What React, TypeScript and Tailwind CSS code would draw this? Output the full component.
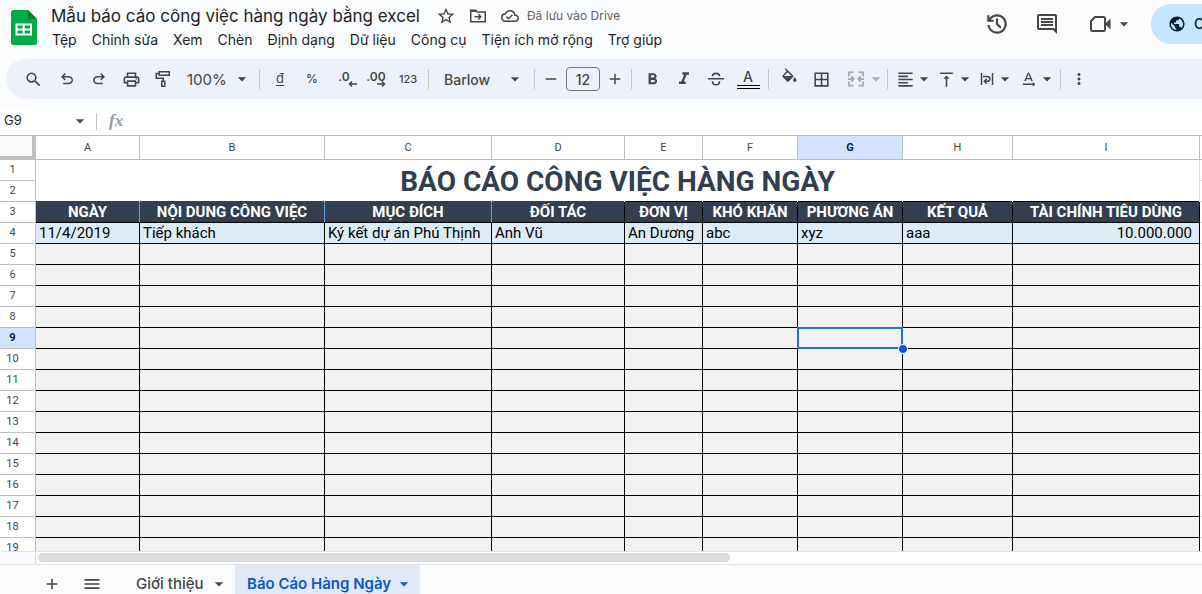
import type { ReactNode } from 'react'
import {
  MdAdd, MdArrowDropDown, MdBorderAll, MdFormatAlignLeft, MdFormatBold, MdFormatItalic,
  MdMenu, MdMoreVert, MdOutlineCloudDone, MdOutlineComment, MdOutlinePrint,
  MdPublic, MdRemove, MdSearch, MdStarBorder, MdTextRotationNone, MdVerticalAlignTop,
} from 'react-icons/md'

const menus = ['Tệp', 'Chỉnh sửa', 'Xem', 'Chèn', 'Định dạng', 'Dữ liệu', 'Công cụ', 'Tiện ích mở rộng', 'Trợ giúp']

// headBorder: lines around the cell in the dark header row
const columns = [
  { id: 'A', col: 'w-[104px]', title: 'NGÀY', value: '11/4/2019', headBorder: 'border-t-[#333f4f] border-r-[#5b9bd5]' },
  { id: 'B', col: 'w-[185px]', title: 'NỘI DUNG CÔNG VIỆC', value: 'Tiếp khách', headBorder: 'border-t-[#333f4f] border-r-[#5b9bd5]' },
  { id: 'C', col: 'w-[167px]', title: 'MỤC ĐÍCH', value: 'Ký kết dự án Phú Thịnh', headBorder: 'border-t-[#333f4f] border-r-[#5b9bd5]' },
  { id: 'D', col: 'w-[133px]', title: 'ĐỐI TÁC', value: 'Anh Vũ', headBorder: 'border-t-[#333f4f] border-r-black' },
  { id: 'E', col: 'w-[78px]', title: 'ĐƠN VỊ', value: 'An Dương', headBorder: 'border-t-black border-r-black' },
  { id: 'F', col: 'w-[95px]', title: 'KHÓ KHĂN', value: 'abc', headBorder: 'border-t-black border-r-black' },
  { id: 'G', col: 'w-[105px]', title: 'PHƯƠNG ÁN', value: 'xyz', headBorder: 'border-t-black border-r-black' },
  { id: 'H', col: 'w-[110px]', title: 'KẾT QUẢ', value: 'aaa', headBorder: 'border-t-black border-r-black' },
  { id: 'I', col: 'w-[187px]', title: 'TÀI CHÍNH TIÊU DÙNG', value: '10.000.000', headBorder: 'border-t-black border-r-black' },
]

const emptyRows = Array.from({ length: 15 }, (_, i) => i + 5)
const active = { col: 'G', row: 9 }

function Symbol({ d, className = 'size-[18px]' }: { d: string; className?: string }) {
  return (
    <svg viewBox="0 -960 960 960" fill="currentColor" className={className}>
      <path d={d} />
    </svg>
  )
}

function Caret({ className = '' }: { className?: string }) {
  return (
    <span className={`flex size-[18px] shrink-0 items-center justify-center ${className}`}>
      <MdArrowDropDown className="size-5 shrink-0" />
    </span>
  )
}

function Tool({ label, children }: { label: string; children: ReactNode }) {
  return (
    <button aria-label={label} className="flex h-7 w-8 shrink-0 items-center justify-center rounded hover:bg-black/5">
      {children}
    </button>
  )
}

function DropTool({ label, children }: { label: string; children: ReactNode }) {
  return (
    <button aria-label={label} className="flex h-7 w-[41px] shrink-0 items-center rounded pl-1 hover:bg-black/5">
      {children}
      <Caret />
    </button>
  )
}

function Separator() {
  return <div className="mx-1 h-5 w-px shrink-0 bg-[#c7c7c7]" />
}

function SheetsLogo() {
  return (
    <svg viewBox="0 0 26 35" className="h-[35px] w-[26px]">
      <path d="M2.5 0H17l9 9v23.500a2.500 2.500 0 0 1-2.500 2.500h-21A2.500 2.500 0 0 1 0 32.500v-30A2.500 2.500 0 0 1 2.500 0z" fill="#00ac47" />
      <path d="M17 0l9 9h-9z" fill="#00832d" />
      <path d="M4.500 13.500h16.500v12H4.500zM6.500 15.500v3h5.200v-3zm7.200 0v3H19v-3zm-7.200 5v3h5.200v-3zm7.200 0v3H19v-3z" fill="#fff" fillRule="evenodd" />
    </svg>
  )
}

function Header() {
  return (
    <header className="flex h-[51px] shrink-0 items-start">
      <a href="#" aria-label="Trang tính" className="mt-[10px] ml-[11px] shrink-0">
        <SheetsLogo />
      </a>
      <div className="ml-[10px] min-w-0 flex-1">
        <div className="mt-1 flex h-6 items-center pl-1">
          <h1 className="text-[17px] leading-6 whitespace-nowrap text-[#1f1f1f]">Mẫu báo cáo công việc hàng ngày bằng excel</h1>
          <button aria-label="Gắn dấu sao" className="ml-4">
            <MdStarBorder className="size-5" />
          </button>
          <button aria-label="Di chuyển" className="ml-[13px]">
            <svg viewBox="0 0 18 18" fill="none" stroke="currentColor" strokeWidth="1.500" className="size-[18px]">
              <path d="M1.750 3.250h5l1.500 1.750h8v9.750H1.750z" />
              <path d="M1.750 4.200h5.500" />
              <path d="M5.500 9.800h6M9.300 7.200l2.500 2.600-2.500 2.600" />
            </svg>
          </button>
          <button className="ml-[14px] flex items-center gap-2 text-xs whitespace-nowrap text-[#5f6368]">
            <MdOutlineCloudDone className="size-[18px] text-[#444746]" />
            Đã lưu vào Drive
          </button>
        </div>
        <nav className="mt-px flex gap-[11px] pl-[3px] text-sm leading-[22px] text-[#1f1f1f]">
          {menus.map(m => (
            <button key={m} className="rounded px-[2px] whitespace-nowrap hover:bg-black/5">{m}</button>
          ))}
        </nav>
      </div>
      <div className="flex shrink-0 items-center pt-1">
        <button aria-label="Nhật ký chỉnh sửa" className="flex h-10 w-[50px] items-center justify-center">
          <Symbol className="size-[26px]" d="M480-120q-138 0-240.500-91.500T122-440h82q14 104 92.500 172T480-200q117 0 198.500-81.500T760-480q0-117-81.500-198.500T480-760q-69 0-129 32t-101 88h110v80H120v-240h80v94q51-64 124.500-99T480-840q75 0 140.500 28.500t114 77q48.500 48.500 77 114T840-480q0 75-28.500 140.500t-77 114q-48.500 48.500-114 77T480-120Zm112-192L440-464v-216h80v184l128 128-56 56Z" />
        </button>
        <button aria-label="Nhận xét" className="flex h-10 w-[50px] items-center justify-center">
          <MdOutlineComment className="size-6" />
        </button>
        <button aria-label="Cuộc gọi" className="ml-[18px] flex h-10 w-[42px] items-center">
          <svg viewBox="0 0 21 18" className="h-[18px] w-[21px] shrink-0">
            <path d="M5 2h8.500q1.500 0 1.500 1.500v11q0 1.500-1.500 1.500h-11Q1 16 1 14.500V6z" fill="none" stroke="currentColor" strokeWidth="2" strokeLinejoin="round" />
            <path d="M15 9l5.500-5.500v11z" fill="currentColor" />
          </svg>
          <Caret className="ml-1" />
        </button>
        <button className="ml-[19px] flex h-10 w-[51px] items-center gap-2 overflow-hidden rounded-l-full bg-[#c2e7ff] pl-[17px] text-sm font-medium text-[#001d35]">
          <MdPublic className="size-[18px] shrink-0" />
          <span className="whitespace-nowrap">C</span>
        </button>
      </div>
    </header>
  )
}

function Toolbar() {
  return (
    <div role="toolbar" className="mt-2 ml-[6px] flex h-10 shrink-0 items-center overflow-hidden rounded-l-full bg-[#edf2fa] pl-[11px] text-[#444746]">
      <Tool label="Tìm"><MdSearch className="size-[19px]" /></Tool>
      <div className="w-[2px] shrink-0" />
      <Tool label="Hủy"><Symbol d="M280-200v-80h284q63 0 109.500-40T720-420q0-60-46.500-100T564-560H312l104 104-56 56-200-200 200-200 56 56-104 104h252q97 0 166.500 63T800-420q0 94-69.500 157T564-200H280Z" /></Tool>
      <Tool label="Làm lại"><Symbol d="M396-200q-97 0-166.500-63T160-420q0-94 69.500-157T396-640h252L544-744l56-56 200 200-200 200-56-56 104-104H396q-63 0-109.500 40T240-420q0 60 46.500 100T396-280h284v80H396Z" /></Tool>
      <Tool label="In"><MdOutlinePrint className="size-[19px]" /></Tool>
      <Tool label="Sao chép định dạng">
        <svg viewBox="0 0 18 18" fill="none" stroke="currentColor" strokeWidth="1.500" className="size-[18px]">
          <path d="M5.250 1.750h10v3.500h-10z" />
          <path d="M5 3.500H2.250v4.750h7v3" />
          <path d="M7.750 11.250h3v5h-3z" />
        </svg>
      </Tool>
      <div className="relative ml-2 shrink-0">
        <select aria-label="Thu phóng" className="w-[68px] appearance-none bg-transparent text-[15px]">
          <option>100%</option>
        </select>
        <Caret className="pointer-events-none absolute inset-y-0 right-1 my-auto" />
      </div>
      <Separator />
      <Tool label="Định dạng tiền tệ"><span className="text-[13px] underline underline-offset-2">đ</span></Tool>
      <Tool label="Định dạng phần trăm"><span className="text-xs font-medium">%</span></Tool>
      <Tool label="Giảm số thập phân">
        <span className="relative -mt-1 text-xs font-semibold">.0
          <svg viewBox="0 0 9 6" fill="none" stroke="currentColor" strokeWidth="1.500" className="absolute -right-[7px] -bottom-[2px] h-[6px] w-[9px]">
            <path d="M9 3H1.500M4 .5L1.500 3 4 5.500" />
          </svg>
        </span>
      </Tool>
      <Tool label="Tăng số thập phân">
        <span className="relative -mt-1 text-xs font-semibold">.00
          <svg viewBox="0 0 9 6" fill="none" stroke="currentColor" strokeWidth="1.500" className="absolute right-0 -bottom-[2px] h-[6px] w-[9px]">
            <path d="M0 3h7.500M5 .5L7.500 3 5 5.500" />
          </svg>
        </span>
      </Tool>
      <Tool label="Định dạng khác"><span className="text-[11px] font-medium">123</span></Tool>
      <Separator />
      <div className="relative shrink-0">
        <select aria-label="Phông chữ" className="w-[97px] appearance-none bg-transparent pl-[11px] text-sm font-medium">
          <option>Barlow</option>
        </select>
        <Caret className="pointer-events-none absolute inset-y-0 right-[6px] my-auto" />
      </div>
      <Separator />
      <button aria-label="Giảm cỡ chữ" className="flex size-6 shrink-0 items-center justify-center"><MdRemove className="size-[18px]" /></button>
      <input aria-label="Cỡ chữ" defaultValue="12" className="mx-[3px] h-6 w-[34px] shrink-0 rounded border border-[#747775] text-center text-sm font-medium" />
      <button aria-label="Tăng cỡ chữ" className="flex size-6 shrink-0 items-center justify-center"><MdAdd className="size-[18px]" /></button>
      <Separator />
      <Tool label="Đậm"><MdFormatBold className="size-[19px]" /></Tool>
      <Tool label="Nghiêng"><MdFormatItalic className="size-[20px]" /></Tool>
      <Tool label="Gạch ngang">
        <svg viewBox="0 0 18 18" fill="none" stroke="currentColor" strokeWidth="1.600" className="size-[18px]">
          <path d="M1 8.800h16" />
          <path d="M5.500 6.200c0-3.800 7-3.800 7 0M5.500 11.200c0 4.800 7 4.800 7 0" />
        </svg>
      </Tool>
      <Tool label="Màu văn bản">
        <span className="flex flex-col items-center text-sm leading-[15px] font-medium">
          A
          <span className="mt-px h-1 w-[23px] border-y border-black" />
        </span>
      </Tool>
      <Separator />
      <Tool label="Màu nền">
        <svg viewBox="0 0 18 18" fill="currentColor" className="-mt-1 size-[18px]">
          <path d="M4.800 1.200l1-1 7.300 7.300c.5.500.5 1.100 0 1.600l-4.400 4.400c-.5.500-1.200.5-1.700 0L2.700 9.100c-.5-.5-.5-1.100 0-1.600L6.600 3zM7.700 4.200L4 7.900h7.500z" fillRule="evenodd" />
          <path d="M14.800 9.300s1.700 1.900 1.700 3a1.700 1.700 0 0 1-3.400 0c0-1.100 1.700-3 1.700-3z" />
        </svg>
      </Tool>
      <Tool label="Đường viền"><MdBorderAll className="size-[19px]" /></Tool>
      <button aria-label="Hợp nhất ô" className="flex h-7 w-[46px] shrink-0 items-center gap-[2px] pl-[10px] opacity-40">
        <svg viewBox="0 0 18 18" fill="none" stroke="currentColor" strokeWidth="1.800" className="size-[18px] shrink-0">
          <path d="M6.500 2.400H2v4M11.500 2.400H16v4M6.500 15.600H2v-4M11.500 15.600H16v-4" />
          <path d="M1 9h5.500M4.300 6.500L6.800 9l-2.500 2.500M17 9h-5.500M13.700 6.500L11.200 9l2.500 2.500" />
        </svg>
        <Caret />
      </button>
      <Separator />
      <DropTool label="Căn ngang"><MdFormatAlignLeft className="size-[19px] shrink-0" /></DropTool>
      <DropTool label="Căn dọc">
        <MdVerticalAlignTop className="size-[19px] shrink-0" />
      </DropTool>
      <DropTool label="Xuống dòng">
        <svg viewBox="0 0 18 18" fill="none" stroke="currentColor" strokeWidth="1.500" className="size-[18px] shrink-0">
          <path d="M3.500 3v12M14.500 3v12" />
          <path d="M5 6.500h4.500a2.400 2.400 0 0 1 0 4.800H6.500M8.800 8.800l-2.500 2.500 2.500 2.500" />
        </svg>
      </DropTool>
      <DropTool label="Xoay văn bản"><MdTextRotationNone className="size-[19px] shrink-0" /></DropTool>
      <Separator />
      <button aria-label="Khác" className="flex size-7 shrink-0 items-center justify-center"><MdMoreVert className="size-[18px]" /></button>
    </div>
  )
}

function FormulaBar() {
  return (
    <div className="mt-2 flex h-7 shrink-0 items-center bg-white text-[#444746]">
      <input aria-label="Hộp tên" defaultValue="G9" className="w-[71px] pl-1 text-[13px] text-[#1f1f1f]" />
      <Caret />
      <div className="ml-[7px] h-[17px] w-px bg-[#c7c7c7]" />
      <label htmlFor="formula" className="ml-3 w-5 font-['Liberation_Serif',serif] text-[17px] leading-5 font-bold text-[#9a9a9a] italic">fx</label>
      <input id="formula" className="h-full flex-1 text-[13px] outline-none" />
    </div>
  )
}

function RowHead({ row }: { row: number }) {
  const on = row === active.row
  return (
    <th className={`h-[21px] border-r border-b border-[#c0c0c0] pr-[10px] text-[11px] leading-5 ${on ? 'bg-[#d3e3fd] font-bold text-[#041e49]' : 'bg-white font-normal text-[#444746]'}`}>
      {row}
    </th>
  )
}

// column J, only its left sliver is visible
function Rest() {
  return <td className="border-b border-[#e1e1e1] bg-white" />
}

function Grid() {
  return (
    <div className="min-h-0 flex-1 overflow-hidden border-t border-[#c0c0c0] bg-white">
      <table className="w-full min-w-[1202px] table-fixed border-separate border-spacing-0 font-[Roboto,sans-serif]">
        <colgroup>
          <col className="w-9" />
          {columns.map(c => <col key={c.id} className={c.col} />)}
          <col />
        </colgroup>
        <thead>
          <tr>
            <th className="h-6 border-r-4 border-b-4 border-[#c0c0c0] bg-[#f8f9fa]" />
            {columns.map(c => (
              <th
                key={c.id}
                className={`h-6 border-r border-b border-[#c0c0c0] text-[11px] leading-5 ${c.id === active.col ? 'bg-[#d3e3fd] font-bold text-[#041e49]' : 'font-normal text-[#444746]'}`}
              >
                {c.id}
              </th>
            ))}
            <th className="border-b border-[#c0c0c0]" />
          </tr>
        </thead>
        <tbody>
          <tr>
            <RowHead row={1} />
            <td colSpan={9} rowSpan={2} className="border-r border-[#e1e1e1] pt-[2px] text-center align-middle text-[28px] leading-8 font-bold whitespace-nowrap text-[#333f4f]">
              BÁO CÁO CÔNG VIỆC HÀNG NGÀY
            </td>
            <Rest />
          </tr>
          <tr>
            <RowHead row={2} />
            <Rest />
          </tr>
          <tr>
            <RowHead row={3} />
            {columns.map(c => (
              <td key={c.id} className={`relative border-r border-b border-b-black bg-[#333f4f] text-center text-[15px] leading-5 font-bold whitespace-nowrap text-white ${c.headBorder}`}>
                <span className={`absolute -top-px right-0 left-0 border-t ${c.headBorder}`} />
                {c.title}
              </td>
            ))}
            <Rest />
          </tr>
          <tr>
            <RowHead row={4} />
            {columns.map(c => (
              <td key={c.id} className={`border-r border-b border-black bg-[#ddebf7] text-[15px] leading-5 whitespace-nowrap text-black ${c.id === 'I' ? 'pr-[7px] text-right' : 'pl-[3px]'}`}>
                {c.value}
              </td>
            ))}
            <Rest />
          </tr>
          {emptyRows.map(row => (
            <tr key={row}>
              <RowHead row={row} />
              {columns.map(c => (
                <td key={c.id} className="relative border-r border-b border-black bg-[#f2f2f2]">
                  {c.id === active.col && row === active.row && (
                    <>
                      <span className="absolute -inset-px z-10 border-2 border-[#1a73e8]" />
                      <span className="absolute -right-[6px] -bottom-[6px] z-20 size-[10px] rounded-full border border-white bg-[#0b57d0]" />
                    </>
                  )}
                </td>
              ))}
              <Rest />
            </tr>
          ))}
        </tbody>
      </table>
    </div>
  )
}

function SheetTabs() {
  return (
    <footer className="flex h-[30px] shrink-0 items-stretch border-t border-[#e1e3e1] bg-[#f9fbfd] text-[15px]">
      <button aria-label="Thêm trang tính" className="ml-8 flex w-10 items-center justify-center pt-2"><MdAdd className="size-[18px]" /></button>
      <button aria-label="Tất cả trang tính" className="flex w-10 items-center justify-center pt-2"><MdMenu className="size-5" /></button>
      <button className="ml-3 flex w-[111px] items-center pt-[9px] pl-3 font-medium whitespace-nowrap">
        Giới thiệu
        <Caret className="ml-[6px]" />
      </button>
      <button className="flex items-center bg-[#e1e9f7] px-[7px] pt-[9px] pl-3 font-semibold whitespace-nowrap text-[#0b57d0]">
        Báo Cáo Hàng Ngày
        <Caret className="ml-1" />
      </button>
    </footer>
  )
}

export default function App() {
  return (
    <div className="flex h-screen flex-col overflow-hidden bg-[#f9fbfd] font-[Inter,sans-serif] text-[#444746]">
      <Header />
      <Toolbar />
      <FormulaBar />
      <Grid />
      <div className="flex h-[13px] shrink-0 border-t border-[#e1e3e1] bg-white">
        <div className="w-9 border-r border-[#d9d9d9] bg-[#f8f9fa]" />
        <div className="mt-px ml-[2px] h-[9px] w-[692px] rounded-full bg-[#dadce0]" />
      </div>
      <SheetTabs />
    </div>
  )
}
